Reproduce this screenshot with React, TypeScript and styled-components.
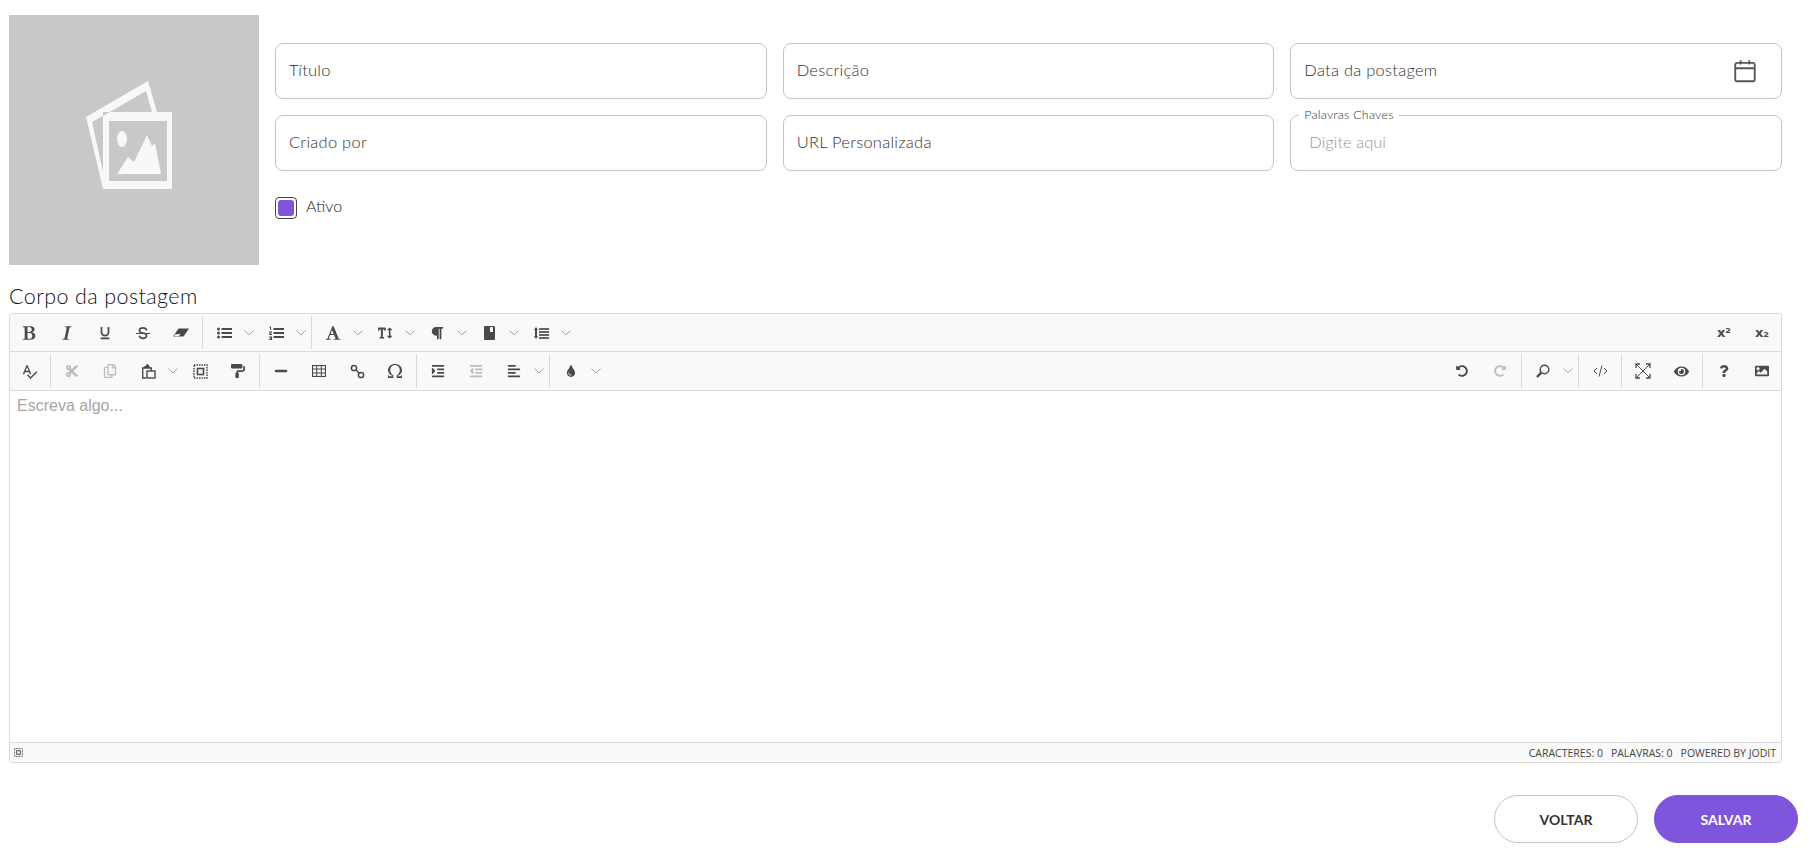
import React from "react";
import styled, { createGlobalStyle } from "styled-components";
import {
  FaAlignLeft, FaCut, FaEye, FaImage, FaIndent, FaMinus,
  FaOutdent, FaPaintRoller, FaParagraph, FaQuestion, FaRedoAlt, FaRegCopy,
  FaTextHeight, FaTint, FaUndoAlt,
} from "react-icons/fa";
import { ImOmega, ImStrikethrough, ImUnderline } from "react-icons/im";
import { MdSpellcheck } from "react-icons/md";

const Global = createGlobalStyle`
  html, body { margin: 0; padding: 0; background: #fff; height: 848px; overflow: hidden; }
  * { box-sizing: border-box; }
`;

const Page = styled.div`
  width: 1814px;
  height: 848px;
  padding: 15px 16px 0 9px;
  font-family: "Lato", "Liberation Sans", sans-serif;
`;
const Top = styled.div`
  display: flex;
  gap: 16px;
  width: 1773px;
`;
const Photo = styled.div`
  width: 250px;
  height: 250px;
  flex: none;
  background: #c8c8c8;
  svg { display: block; }
`;
const Form = styled.div`
  flex: 1;
  padding-top: 28px;
`;
const Grid = styled.div`
  display: grid;
  grid-template-columns: repeat(3, 1fr);
  grid-auto-rows: 56px;
  gap: 16px;
`;
const Field = styled.label`
  display: flex;
  align-items: center;
  justify-content: space-between;
  height: 56px;
  padding: 0 13px 2px;
  border: 1px solid #c4c4c4;
  border-radius: 8px;
  font-size: 16.5px;
  letter-spacing: 0.25px;
  font-weight: 300;
  color: #333;
`;
const Fieldset = styled.fieldset`
  height: 62px;
  margin: -6px 0 0;
  padding: 0 0 0 18px;
  border: 1px solid #c4c4c4;
  border-radius: 8px;
  display: block;
`;
const Legend = styled.legend`
  margin-left: -10px;
  padding: 0 5px;
  font-size: 12.5px;
  line-height: 12px;
  letter-spacing: 0.2px;
  font-weight: 300;
  color: #333;
`;
const Hint = styled.div`
  font-size: 16.5px;
  line-height: 20px;
  margin-top: 11px;
  font-weight: 300;
  color: #999;
`;
const Active = styled.label`
  display: flex;
  align-items: center;
  gap: 9px;
  margin-top: 25px;
  font-size: 16px;
  font-weight: 300;
  color: #222;
`;
const ActiveText = styled.span`
  padding-bottom: 4px;
`;
const Check = styled.span`
  width: 22px;
  height: 22px;
  padding: 2px;
  border: 1px solid #444;
  border-radius: 4px;
  &::after {
    content: "";
    display: block;
    width: 100%;
    height: 100%;
    border-radius: 3px;
    background: #7f55dc;
  }
`;
const Heading = styled.h2`
  margin: 18px 0 0;
  height: 30px;
  font-size: 21.5px;
  line-height: 26px;
  letter-spacing: 0.4px;
  font-weight: 300;
  color: #111;
`;
const Editor = styled.div`
  width: 1773px;
  border: 1px solid #dadada;
  border-radius: 3px;
  overflow: hidden;
`;
const Row = styled.div<{ $tall?: boolean }>`
  display: flex;
  justify-content: space-between;
  height: ${(p) => (p.$tall ? 39 : 38)}px;
  background: #f9f9f9;
  border-bottom: 1px solid #dadada;
`;
const Group = styled.div`
  display: flex;
  align-items: stretch;
`;
const IconBtn = styled.span<{ $off?: boolean }>`
  width: 38px;
  display: flex;
  align-items: center;
  justify-content: center;
  color: ${(p) => (p.$off ? "#bdbdbd" : "#4a4a4a")};
  font-size: 14px;
  svg { display: block; }
`;
const Script = styled.span`
  font-family: "DejaVu Sans", sans-serif;
  font-size: 13px;
  font-weight: 700;
  color: #4a4a4a;
`;
const Caret = styled.span`
  width: 14px;
  padding-right: 3px;
  display: flex;
  align-items: center;
  justify-content: center;
  color: #a5a5a5;
`;
const Sep = styled.span`
  width: 1px;
  margin: 2px 2px;
  background: #dadada;
`;
const Body = styled.div`
  height: 351px;
  padding: 6px 7px;
  font-family: "Liberation Sans", Arial, sans-serif;
  font-size: 16px;
  line-height: 18px;
  color: #a5a5a5;
  background: #fff;
`;
const Status = styled.div`
  height: 20px;
  display: flex;
  align-items: center;
  justify-content: space-between;
  padding: 0 5px 0 4px;
  background: #f9f9f9;
  border-top: 1px solid #dadada;
  font-family: "Open Sans", sans-serif;
  font-size: 10.5px;
  color: #444;
`;
const StatusItems = styled.div`
  display: flex;
  gap: 8px;
`;
const Actions = styled.div`
  display: flex;
  justify-content: flex-end;
  gap: 16px;
  margin-top: 32px;
`;
const Button = styled.button<{ $primary?: boolean }>`
  width: 144px;
  height: 48px;
  border-radius: 24px;
  border: 1px solid ${(p) => (p.$primary ? "#7f55dc" : "#c4c4c4")};
  background: ${(p) => (p.$primary ? "#7f55dc" : "#fff")};
  color: ${(p) => (p.$primary ? "#fff" : "#333")};
  font-family: "Lato", "Liberation Sans", sans-serif;
  font-size: 14px;
  font-weight: 700;
`;
const CalendarIcon = styled.svg`
  margin: 2px 10px 0 0;
  flex: none;
`;

const Fa4 = ({ d, size = 16 }: { d: string; size?: number }) => (
  <svg width={size} height={size} viewBox="0 0 1792 1792" fill="currentColor"><path d={d} /></svg>
);
const BOLD = "M747 1521q74 32 140 32 376 0 376-335 0-114-41-180-27-44-61.5-74t-67.5-46.5-80.5-25-84-10.5-94.5-2q-73 0-101 10 0 53-.5 159t-.5 158q0 8-1 67.5t-.5 96.5 4.5 83.5 12 66.5zm-14-746q42 7 109 7 82 0 143-13t110-44.5 74.5-89.5 25.5-142q0-70-29-122.5t-79-82-108-43.5-124-14q-50 0-130 13 0 50 4 151t4 152q0 27-.5 80t-.5 79q0 46 1 69zm-541 889l2-94q15-4 85-16t106-27q7-12 12.5-27t8.5-33.5 5.5-32.5 3-37.5.5-34v-65.5q0-982-22-1025-4-8-22-14.5t-44.5-11-49.5-7-48.5-4.5-30.5-3l-4-83q98-2 340-11.5t373-9.5q23 0 68 .5t68 .5q70 0 136.5 13t128.5 42 108 71 74 104.5 28 137.5q0 52-16.5 95.5t-39 72-64.5 57.5-73 45-84 40q154 35 256.5 134t102.5 248q0 100-35 179.5t-93.5 130.5-138 85.5-163.5 48.5-176 14q-44 0-132-3t-132-3q-106 0-307 11t-231 12z";
const ITALIC = "M384 1662l17-85q6-2 81.5-21.5t111.5-37.5q28-35 41-101 1-7 62-289t114-543.5 52-296.5v-25q-24-13-54.5-18.5t-69.5-8-58-5.5l19-103q33 2 120 6.5t149.5 7 120.5 2.5q48 0 98.5-2.5t121-7 98.5-6.5q-5 39-19 89-30 10-101.5 28.5t-108.5 33.5q-8 19-14 42.5t-9 40-7.5 45.5-6.5 42q-27 148-87.5 419.5t-77.5 355.5q-2 9-13 58t-20 90-16 83.5-6 57.5l1 18q17 4 185 31-3 44-16 99-11 0-32.5 1.5t-32.5 1.5q-29 0-87-10t-86-10q-138-2-206-2-51 0-143 9t-121 11z";
const FONT = "M789 559l-170 450q33 0 136.5 2t160.5 2q19 0 57-2-87-253-184-452zm-725 1105l2-79q23-7 56-12.5t57-10.5 49.5-14.5 44.5-29 31-50.5l237-616 280-724h128q8 14 11 21l205 480q33 78 106 257.5t114 274.5q15 34 58 144.5t72 168.5q20 45 35 57 19 15 88 29.5t84 20.5q6 38 6 57 0 5-.5 13.5t-.5 12.5q-63 0-190-8t-191-8q-76 0-215 7t-178 8q0-43 4-78l131-28q1 0 12.5-2.5t15.5-3.5 14.5-4.5 15-6.5 11-8 9-11 2.5-14q0-16-31-96.5t-72-177.5-42-100l-450-2q-26 58-76.5 195.5t-50.5 162.5q0 22 14 37.5t43.5 24.5 48.5 13.5 57 8.5 41 4q1 19 1 58 0 9-2 27-58 0-174.5-10t-174.5-10q-8 0-26.5 4t-21.5 4q-80 14-188 14z";

const Chevron = () => (
  <svg width="10" height="6" viewBox="0 0 10 6" fill="none" stroke="currentColor" strokeWidth="1">
    <polyline points="0.5,0.5 5,5 9.5,0.5" />
  </svg>
);
const PhotoArt = () => (
  <svg width="250" height="250" viewBox="9 15 250 250">
    <g fill="#f8f8f8" fillRule="evenodd">
      <path d="M86 117 148 81 157 112H172V189H103ZM92 122 103 172V112H152L146 91 108 113ZM109 121V181H167V121Z" />
      <ellipse cx="122" cy="139" rx="5" ry="8" />
      <path d="M117 174 128 157 134 162 147 135 152 146 155 143 161 174Z" />
    </g>
  </svg>
);
const Eraser = () => (
  <svg width="16" height="14" viewBox="0 0 16 14" fill="currentColor">
    <path d="M5.5 2.5H16L10.5 10.5H0Z" />
    <path d="M2.2 8.2H7.6L5.8 10.2H1.4Z" fill="#f9f9f9" />
  </svg>
);
const ListUl = () => (
  <svg width="15" height="12" viewBox="0 0 15 12" fill="currentColor">
    <circle cx="1.5" cy="2" r="1.5" /><circle cx="1.5" cy="6" r="1.5" /><circle cx="1.5" cy="10" r="1.5" />
    <path d="M4.5 1H15V3H4.5ZM4.5 5H15V7H4.5ZM4.5 9H15V11H4.5Z" />
  </svg>
);
const ListOl = () => (
  <svg width="15" height="14" viewBox="0 0 15 14" fill="currentColor">
    <path d="M0.5 0.5H2V4H1V1.5H0.5ZM0 5.5H3V6.5L1.3 8H3V9H0V8L1.8 6.5H0ZM0 10.5H3V14H0V13H2V12.7H1V11.8H2V11.5H0Z" />
    <path d="M4.5 2H15V4H4.5ZM4.5 6H15V8H4.5ZM4.5 10H15V12H4.5Z" />
  </svg>
);
const Bookish = () => (
  <svg width="13" height="14" viewBox="0 0 13 14" fill="currentColor" fillRule="evenodd">
    <path d="M2 0H11Q12 0 12 1V13Q12 14 11 14H2Q1 14 1 13V1Q1 0 2 0ZM7 1V6H10V1Z" />
  </svg>
);
const LineHeight = () => (
  <svg width="15" height="14" viewBox="0 0 15 14" fill="currentColor">
    <path d="M2 1 4 4H3V10H4L2 13 0 10H1V4H0Z" />
    <path d="M5 2H15V4H5ZM5 5H15V7H5ZM5 8H15V10H5ZM5 11H15V13H5Z" opacity=".85" />
  </svg>
);
const Paste = () => (
  <svg width="15" height="15" viewBox="0 0 15 15" fill="none" stroke="currentColor" strokeWidth="1.4">
    <path d="M5 14H1.7V4H10.3V7" />
    <path d="M4 4V2.6H5L6 1H6.8L7.6 2.6H8V4" fill="currentColor" />
    <rect x="6" y="7" width="8" height="7" />
  </svg>
);
const SelectAll = ({ size = 15 }: { size?: number }) => (
  <svg width={size} height={size} viewBox="0 0 15 15" fill="none" stroke="currentColor">
    <rect x="1" y="1" width="13" height="13" strokeDasharray="1.5 1" strokeWidth="1.5" />
    <rect x="4.5" y="4.5" width="6" height="6" strokeWidth="1.6" />
  </svg>
);
const TableGrid = () => (
  <svg width="14" height="12" viewBox="0 0 14 12" fill="none" stroke="currentColor" strokeWidth="1">
    <rect x="0.5" y="0.5" width="13" height="11" strokeWidth="1.2" />
    <path d="M0 4H14M0 8H14M4.7 0V12M9.3 0V12" />
  </svg>
);
const LinkRings = () => (
  <svg width="15" height="15" viewBox="0 0 15 15" fill="none" stroke="currentColor" strokeWidth="1.5">
    <circle cx="4" cy="4" r="2.6" />
    <circle cx="11" cy="11" r="2.6" />
    <path d="M5.8 5.8 9.2 9.2" />
  </svg>
);
const Search = () => (
  <svg width="14" height="14" viewBox="0 0 14 14" fill="none" stroke="currentColor">
    <circle cx="8.5" cy="5.5" r="4.3" strokeWidth="1.5" />
    <path d="M5.3 8.7 1 13" strokeWidth="2.4" />
  </svg>
);
const CodeTag = () => (
  <svg width="15" height="12" viewBox="0 0 15 12" fill="none" stroke="currentColor" strokeWidth="1">
    <polyline points="4,3 1,6 4,9" />
    <polyline points="11,3 14,6 11,9" />
    <path d="M9 0.5 6 11.5" />
  </svg>
);
const Expand = () => (
  <svg width="16" height="16" viewBox="0 0 16 16" fill="none" stroke="currentColor" strokeWidth="1">
    <path d="M1 1 15 15M15 1 1 15" />
    <path d="M1 5V1H5M11 1H15V5M15 11V15H11M5 15H1V11" strokeWidth="1.3" />
  </svg>
);

const Tool = ({ children, off }: { children: React.ReactNode; off?: boolean }) => (
  <IconBtn $off={off}>{children}</IconBtn>
);
const Drop = ({ children }: { children: React.ReactNode }) => (
  <>
    <IconBtn>{children}</IconBtn>
    <Caret><Chevron /></Caret>
  </>
);

export default function App() {
  return (
    <Page>
      <Global />
      <Top>
        <Photo><PhotoArt /></Photo>
        <Form>
          <Grid>
            <Field>Título</Field>
            <Field>Descrição</Field>
            <Field>
              Data da postagem
              <CalendarIcon width="26" height="26" viewBox="0 0 24 24" fill="none" stroke="#555" strokeWidth="1.7">
                <rect x="3" y="4.5" width="18" height="17" rx="2" />
                <path d="M3 9.5H21M8 2V6M16 2V6" />
              </CalendarIcon>
            </Field>
            <Field>Criado por</Field>
            <Field>URL Personalizada</Field>
            <Fieldset>
              <Legend>Palavras Chaves</Legend>
              <Hint>Digite aqui</Hint>
            </Fieldset>
          </Grid>
          <Active><Check /><ActiveText>Ativo</ActiveText></Active>
        </Form>
      </Top>
      <Heading>Corpo da postagem</Heading>
      <Editor>
        <Row>
          <Group>
            <Tool><Fa4 d={BOLD} /></Tool>
            <Tool><Fa4 d={ITALIC} /></Tool>
            <Tool><ImUnderline /></Tool>
            <Tool><ImStrikethrough /></Tool>
            <Tool><Eraser /></Tool>
            <Sep />
            <Drop><ListUl /></Drop>
            <Drop><ListOl /></Drop>
            <Sep />
            <Drop><Fa4 d={FONT} /></Drop>
            <Drop><FaTextHeight /></Drop>
            <Drop><FaParagraph /></Drop>
            <Drop><Bookish /></Drop>
            <Drop><LineHeight /></Drop>
          </Group>
          <Group>
            <Tool><Script>x²</Script></Tool>
            <Tool><Script>x₂</Script></Tool>
          </Group>
        </Row>
        <Row $tall>
          <Group>
            <Tool><MdSpellcheck size={17} /></Tool>
            <Sep />
            <Tool off><FaCut /></Tool>
            <Tool off><FaRegCopy /></Tool>
            <Drop><Paste /></Drop>
            <Tool><SelectAll /></Tool>
            <Tool><FaPaintRoller /></Tool>
            <Sep />
            <Tool><FaMinus /></Tool>
            <Tool><TableGrid /></Tool>
            <Tool><LinkRings /></Tool>
            <Tool><ImOmega /></Tool>
            <Sep />
            <Tool><FaIndent /></Tool>
            <Tool off><FaOutdent /></Tool>
            <Drop><FaAlignLeft /></Drop>
            <Sep />
            <Drop><FaTint size={12} /></Drop>
          </Group>
          <Group>
            <Tool><FaUndoAlt size={12} /></Tool>
            <Tool off><FaRedoAlt size={12} /></Tool>
            <Sep />
            <Drop><Search /></Drop>
            <Sep />
            <Tool><CodeTag /></Tool>
            <Sep />
            <Tool><Expand /></Tool>
            <Tool><FaEye size={15} /></Tool>
            <Sep />
            <Tool><FaQuestion size={12} /></Tool>
            <Tool><FaImage /></Tool>
          </Group>
        </Row>
        <Body>Escreva algo...</Body>
        <Status>
          <SelectAll size={9} />
          <StatusItems>
            <span>CARACTERES: 0</span>
            <span>PALAVRAS: 0</span>
            <span>POWERED BY JODIT</span>
          </StatusItems>
        </Status>
      </Editor>
      <Actions>
        <Button>VOLTAR</Button>
        <Button $primary>SALVAR</Button>
      </Actions>
    </Page>
  );
}
